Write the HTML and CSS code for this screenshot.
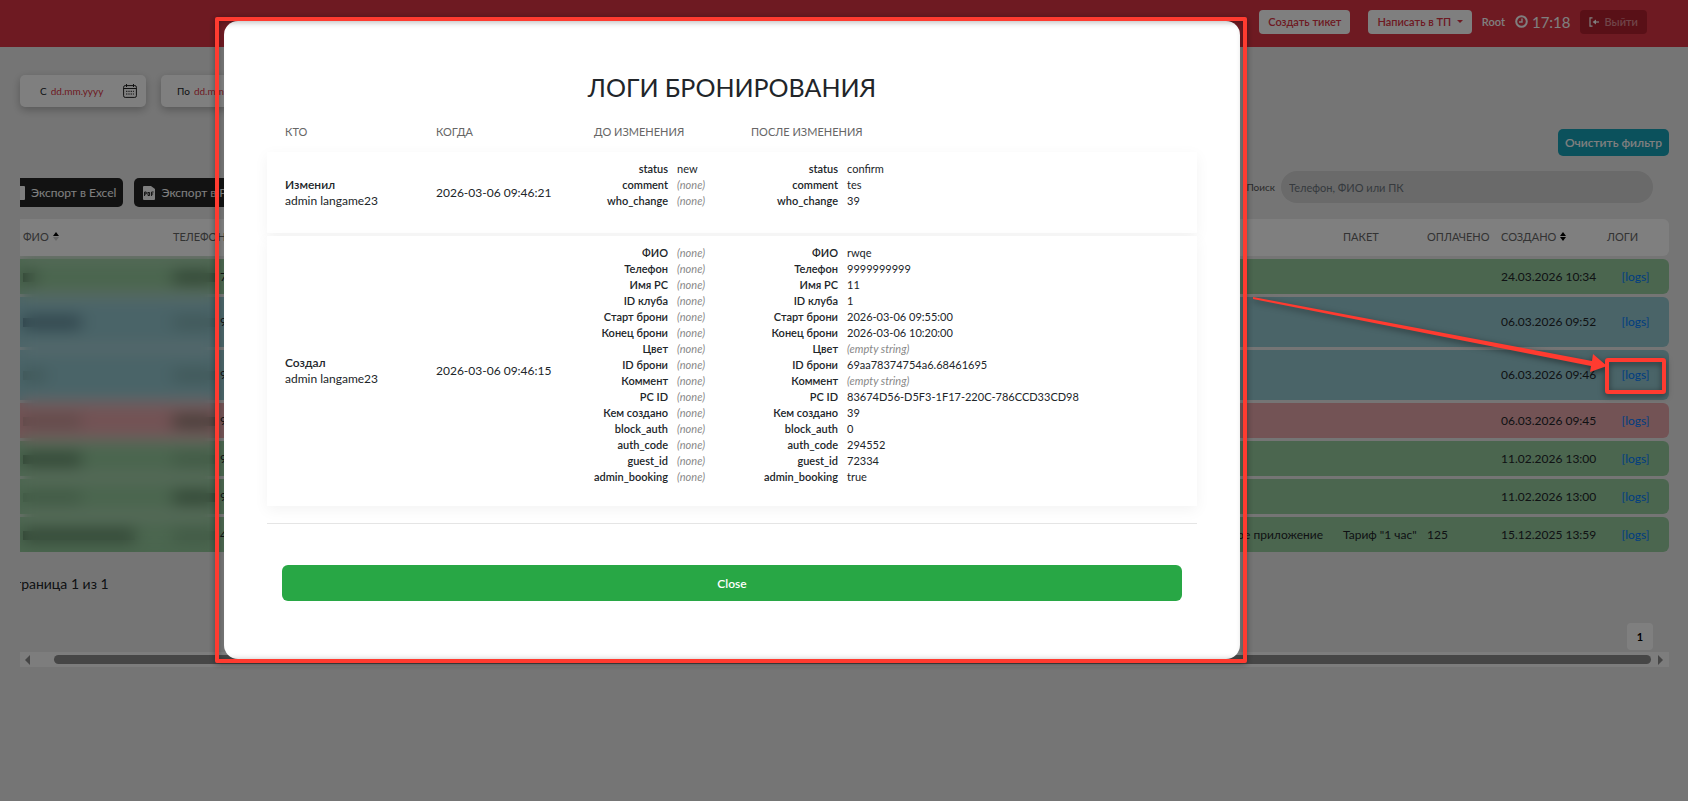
FILE: index.html
```html
<!DOCTYPE html>
<html lang="ru">
<head>
    <meta charset="UTF-8">
    <meta name="viewport" content="width=device-width, initial-scale=1.0">
    <title>Логи бронирования</title>
    <link rel="stylesheet" href="styles.css">
</head>
<body>
    <header class="topbar">
        <span class="topbar-title">Проба</span>
        <div class="topbar-actions">
            <button type="button" class="btn-light">Создать тикет</button>
            <button type="button" class="btn-light btn-support">Написать в ТП <span class="caret"></span></button>
            <span class="user">Root</span>
            <span class="clock">
                <svg width="13" height="13" viewBox="0 0 13 13" fill="none" stroke="currentColor" stroke-width="2"><circle cx="6.5" cy="6.5" r="5.3"/><path d="M7 3.5V7H4" stroke-width="1.4"/></svg>
                17:18
            </span>
            <button type="button" class="btn-exit">
                <svg width="10" height="10" viewBox="0 0 10 10" fill="none" stroke="currentColor" stroke-width="1.2"><path d="M3.5.8H1v8.4h2.5"/><path d="M10 5H5"/><path fill="currentColor" stroke="none" d="M3.6 5 7 2.6v4.8z"/></svg>
                Выйти
            </button>
        </div>
    </header>

    <main class="page">
        <div class="filters">
            <div class="date-box">
                <label for="dateFrom">С</label>
                <input type="text" id="dateFrom" placeholder="dd.mm.yyyy">
                <svg class="calendar" width="14" height="14" viewBox="0 0 14 14" fill="none" stroke="currentColor"><rect x=".6" y="1.6" width="12.8" height="11.8" rx="1.6"/><path d="M.6 4.5h12.8M3.5 0v3M10.5 0v3"/><path d="M3 7.3h8M3 10h8" stroke-dasharray="1.4 .9"/></svg>
            </div>
            <div class="date-box date-to">
                <label for="dateTo">По</label>
                <input type="text" id="dateTo" placeholder="dd.mm.yyyy">
            </div>
        </div>

        <div class="clear-row">
            <button type="button" class="btn-clear">Очистить фильтр</button>
        </div>

        <div class="scroller">
            <div class="toolbar">
                <button type="button" class="btn-export">
                    <svg width="13" height="14" viewBox="0 0 13 14"><path fill="#fff" d="M1 0h11a1 1 0 0 1 1 1v12a1 1 0 0 1-1 1H1a1 1 0 0 1-1-1V1a1 1 0 0 1 1-1z"/></svg>
                    Экспорт в Excel
                </button>
                <button type="button" class="btn-export">
                    <svg width="12" height="14" viewBox="0 0 12 14"><path fill="#fff" d="M1 0h7l4 3v10a1 1 0 0 1-1 1H1a1 1 0 0 1-1-1V1a1 1 0 0 1 1-1z"/><path fill="none" stroke="#222" d="M1.6 10V6h1.6v2H1.6M5 6v3.5h1.6V6.5H5M8.6 10V6h2M8.6 8h1.6"/></svg>
                    Экспорт в PDF
                </button>
                <div class="search">
                    <label for="search">Поиск</label>
                    <input type="search" id="search" placeholder="Телефон, ФИО или ПК">
                </div>
            </div>

            <div class="table-area">
                <table class="bookings">
                    <colgroup>
                        <col class="col-name"><col class="col-phone"><col><col class="col-source"><col class="col-package"><col class="col-paid"><col class="col-created"><col class="col-logs">
                    </colgroup>
                    <thead>
                        <tr>
                            <th>ФИО <svg width="6" height="9" viewBox="0 0 6 9"><path d="M0 4 3 0l3 4z"/><path class="faded" d="M0 5h6L3 9z"/></svg></th>
                            <th>ТЕЛЕФОН</th>
                            <th></th>
                            <th></th>
                            <th>ПАКЕТ</th>
                            <th>ОПЛАЧЕНО</th>
                            <th>СОЗДАНО <svg width="6" height="9" viewBox="0 0 6 9"><path d="M0 4 3 0l3 4zM0 5h6L3 9z"/></svg></th>
                            <th>ЛОГИ</th>
                        </tr>
                    </thead>
                    <tbody>
                        <tr class="green">
                            <td><span class="mask mask-xs"></span></td>
                            <td><span class="mask mask-phone"></span>7</td>
                            <td></td><td></td><td></td><td></td>
                            <td>24.03.2026 10:34</td>
                            <td><a href="#">[logs]</a></td>
                        </tr>
                        <tr class="blue tall">
                            <td><span class="mask mask-md mask-blue"></span></td>
                            <td><span class="mask mask-phone mask-faint"></span>9</td>
                            <td></td><td></td><td></td><td></td>
                            <td>06.03.2026 09:52</td>
                            <td><a href="#">[logs]</a></td>
                        </tr>
                        <tr class="blue tall">
                            <td><span class="mask mask-sm mask-faint"></span></td>
                            <td><span class="mask mask-phone mask-faint"></span>9</td>
                            <td></td><td></td><td></td><td></td>
                            <td>06.03.2026 09:46</td>
                            <td><a href="#">[logs]</a></td>
                        </tr>
                        <tr class="red">
                            <td><span class="mask mask-md mask-faint"></span></td>
                            <td><span class="mask mask-phone"></span>9</td>
                            <td></td><td></td><td></td><td></td>
                            <td>06.03.2026 09:45</td>
                            <td><a href="#">[logs]</a></td>
                        </tr>
                        <tr class="green">
                            <td><span class="mask mask-md"></span></td>
                            <td><span class="mask mask-phone mask-faint"></span>9</td>
                            <td></td><td></td><td></td><td></td>
                            <td>11.02.2026 13:00</td>
                            <td><a href="#">[logs]</a></td>
                        </tr>
                        <tr class="green">
                            <td><span class="mask mask-md mask-faint"></span></td>
                            <td><span class="mask mask-phone"></span>9</td>
                            <td></td><td></td><td></td><td></td>
                            <td>11.02.2026 13:00</td>
                            <td><a href="#">[logs]</a></td>
                        </tr>
                        <tr class="green">
                            <td><span class="mask mask-lg"></span></td>
                            <td><span class="mask mask-phone mask-faint"></span>4</td>
                            <td></td>
                            <td class="source">Мобильное приложение</td>
                            <td>Тариф "1 час"</td>
                            <td>125</td>
                            <td>15.12.2025 13:59</td>
                            <td><a href="#">[logs]</a></td>
                        </tr>
                    </tbody>
                </table>
                <div class="privacy-blur"></div>
            </div>

            <p class="page-info">Страница 1 из 1</p>
            <div class="pagination">
                <button type="button" class="page-btn">1</button>
            </div>
        </div>
        <div class="scrollbar">
            <svg width="5" height="10" viewBox="0 0 5 10"><path d="M5 0v10L0 5z"/></svg>
            <div class="thumb"></div>
            <svg width="5" height="10" viewBox="0 0 5 10"><path d="M0 0v10l5-5z"/></svg>
        </div>
    </main>

    <div class="overlay">
        <div class="modal" role="dialog" aria-labelledby="modalTitle">
            <h1 id="modalTitle">ЛОГИ БРОНИРОВАНИЯ</h1>
            <table class="logs">
                <colgroup>
                    <col class="log-who"><col class="log-when"><col class="log-before"><col>
                </colgroup>
                <thead>
                    <tr>
                        <th>КТО</th>
                        <th>КОГДА</th>
                        <th>ДО ИЗМЕНЕНИЯ</th>
                        <th>ПОСЛЕ ИЗМЕНЕНИЯ</th>
                    </tr>
                </thead>
                <tbody>
                    <tr>
                        <td><b>Изменил</b><br>admin langame23</td>
                        <td>2026-03-06 09:46:21</td>
                        <td class="props">
                            <dl>
                                <dt>status</dt><dd>new</dd>
                                <dt>comment</dt><dd><i>(none)</i></dd>
                                <dt>who_change</dt><dd><i>(none)</i></dd>
                            </dl>
                        </td>
                        <td class="props props-after">
                            <dl>
                                <dt>status</dt><dd>confirm</dd>
                                <dt>comment</dt><dd>tes</dd>
                                <dt>who_change</dt><dd>39</dd>
                            </dl>
                        </td>
                    </tr>
                    <tr>
                        <td><b>Создал</b><br>admin langame23</td>
                        <td>2026-03-06 09:46:15</td>
                        <td class="props">
                            <dl>
                                <dt>ФИО</dt><dd><i>(none)</i></dd>
                                <dt>Телефон</dt><dd><i>(none)</i></dd>
                                <dt>Имя PC</dt><dd><i>(none)</i></dd>
                                <dt>ID клуба</dt><dd><i>(none)</i></dd>
                                <dt>Старт брони</dt><dd><i>(none)</i></dd>
                                <dt>Конец брони</dt><dd><i>(none)</i></dd>
                                <dt>Цвет</dt><dd><i>(none)</i></dd>
                                <dt>ID брони</dt><dd><i>(none)</i></dd>
                                <dt>Коммент</dt><dd><i>(none)</i></dd>
                                <dt>PC ID</dt><dd><i>(none)</i></dd>
                                <dt>Кем создано</dt><dd><i>(none)</i></dd>
                                <dt>block_auth</dt><dd><i>(none)</i></dd>
                                <dt>auth_code</dt><dd><i>(none)</i></dd>
                                <dt>guest_id</dt><dd><i>(none)</i></dd>
                                <dt>admin_booking</dt><dd><i>(none)</i></dd>
                            </dl>
                        </td>
                        <td class="props props-after">
                            <dl>
                                <dt>ФИО</dt><dd>rwqe</dd>
                                <dt>Телефон</dt><dd>9999999999</dd>
                                <dt>Имя PC</dt><dd>11</dd>
                                <dt>ID клуба</dt><dd>1</dd>
                                <dt>Старт брони</dt><dd>2026-03-06 09:55:00</dd>
                                <dt>Конец брони</dt><dd>2026-03-06 10:20:00</dd>
                                <dt>Цвет</dt><dd><i>(empty string)</i></dd>
                                <dt>ID брони</dt><dd>69aa78374754a6.68461695</dd>
                                <dt>Коммент</dt><dd><i>(empty string)</i></dd>
                                <dt>PC ID</dt><dd>83674D56-D5F3-1F17-220C-786CCD33CD98</dd>
                                <dt>Кем создано</dt><dd>39</dd>
                                <dt>block_auth</dt><dd>0</dd>
                                <dt>auth_code</dt><dd>294552</dd>
                                <dt>guest_id</dt><dd>72334</dd>
                                <dt>admin_booking</dt><dd>true</dd>
                            </dl>
                        </td>
                    </tr>
                </tbody>
            </table>
            <hr>
            <button type="button" class="btn-close">Close</button>
            <div class="highlight"></div>
        </div>
    </div>

    <!-- Arrow from the dialog to the [logs] link -->
    <svg class="pointer" width="440" height="420" viewBox="0 0 440 420">
        <path fill="#ff3b30" d="M5 297 344 361 345 354 359 366 342 372 343 366 5 299z"/>
        <rect x="359" y="360" width="57" height="32" rx="1" fill="none" stroke="#ff3b30" stroke-width="4"/>
    </svg>
</body>
</html>
```
FILE: styles.css
```css
* {
    margin: 0;
    padding: 0;
    box-sizing: border-box;
}

body {
    font-family: Lato, 'Open Sans', sans-serif;
    font-size: 12px;
    line-height: 16px;
    color: #212529;
    background: #ebebeb;
    min-height: 100vh;
    overflow: hidden;
}

button,
input {
    font-family: inherit;
    font-size: 11px;
    border: none;
}

button {
    cursor: pointer;
    font-weight: 600;
}

/* Top bar */
.topbar {
    background: #dc3545;
    color: #fff;
    height: 47px;
    padding: 0 41px 4px 20px;
    display: flex;
    align-items: center;
}

.topbar-title {
    margin-left: auto;
    margin-right: 5px;
    font-size: 14px;
}

.topbar-actions {
    flex: 0 0 50%;
    display: flex;
    align-items: center;
    justify-content: flex-end;
}

.btn-light {
    background: #fff;
    color: #dc3545;
    height: 24px;
    padding: 0 9px;
    border-radius: 4px;
    margin-right: 18px;
}

.btn-support {
    margin-right: 10px;
}

.caret {
    display: inline-block;
    border: 3px solid transparent;
    border-top-color: #dc3545;
    border-bottom: 0;
    margin: 0 0 3px 3px;
}

.user {
    font-size: 11px;
    font-weight: 600;
    margin-right: 10px;
}

.clock {
    display: flex;
    align-items: center;
    gap: 4px;
    font-size: 15px;
    margin-right: 9px;
}

.btn-exit {
    background: #b2212f;
    color: #e08a92;
    height: 24px;
    padding: 0 9px;
    border-radius: 4px;
    display: flex;
    align-items: center;
    gap: 6px;
}

.btn-exit svg {
    color: #fff;
}

/* Page */
.page {
    padding: 28px 19px 0 20px;
}

.filters {
    display: flex;
    gap: 15px;
}

.date-box {
    width: 126px;
    height: 32px;
    display: flex;
    align-items: center;
    gap: 4px;
    padding: 0 9px 0 20px;
    background: #fff;
    border-radius: 5px;
    box-shadow: 0 3px 8px rgba(0, 0, 0, 0.25);
    font-size: 10px;
}

.date-to {
    padding-left: 16px;
}

.date-box input {
    flex: 1;
    min-width: 0;
    font-size: 10px;
    background: transparent;
}

.date-box input::placeholder {
    color: #dc3545;
}

.calendar {
    flex: none;
    color: #222;
}

.clear-row {
    display: flex;
    justify-content: flex-end;
    margin: 22px 0 15px;
}

.btn-clear {
    height: 27px;
    padding: 0 7px;
    border-radius: 5px;
    background: #17a2b8;
    color: #fff;
    font-size: 12px;
}

.scroller {
    overflow: hidden;
}

.toolbar {
    display: flex;
    align-items: center;
    gap: 11px;
    height: 32px;
    margin: 0 16px 13px -17px;
}

.btn-export {
    display: flex;
    align-items: center;
    gap: 6px;
    height: 29px;
    padding: 0 7px 0 9px;
    margin-top: 11px;
    border-radius: 5px;
    background: #252525;
    color: #fff;
    font-size: 12px;
    font-weight: 400;
    white-space: nowrap;
}

.search {
    display: flex;
    align-items: center;
    gap: 6px;
    margin-left: auto;
}

.search label {
    font-size: 10px;
    color: #555;
}

.search input {
    width: 372px;
    height: 32px;
    padding: 0 8px;
    border-radius: 16px;
    background: #d4d4d4;
}

.search input::placeholder {
    color: #6c757d;
}

/* Bookings table */
.table-area {
    position: relative;
}

.bookings {
    width: 100%;
    table-layout: fixed;
    border-collapse: separate;
    border-spacing: 0 3px;
}

.col-name { width: 150px; }
.col-phone { width: 120px; }
.col-source { width: 170px; }
.col-package { width: 84px; }
.col-paid { width: 74px; }
.col-created { width: 106px; }
.col-logs { width: 65px; }

.bookings th {
    height: 37px;
    padding: 0 3px 2px;
    background: #fff;
    color: #666;
    font-size: 11px;
    font-weight: 400;
    text-align: left;
    white-space: nowrap;
}

.bookings th svg {
    margin-left: 1px;
    fill: #000;
}

.bookings th .faded {
    fill: #ccc;
}

.bookings td {
    height: 35px;
    padding: 0 3px;
    white-space: nowrap;
}

.bookings .tall td {
    height: 50px;
}

.bookings th:last-child,
.bookings td:last-child {
    border-radius: 0 6px 6px 0;
}

.bookings td:last-child {
    padding-right: 5px;
    text-align: center;
}

.bookings a {
    color: #007bff;
    text-decoration: none;
}

.bookings td.source {
    padding-right: 17px;
    text-align: right;
}

.green td { background: #96cc9e; }
.blue td { background: #94c8d0; }
.red td { background: #e6a6aa; }

/* Personal data */
.mask {
    display: inline-block;
    height: 9px;
    vertical-align: middle;
    background: #3e5a44;
    opacity: 0.8;
}

.mask-xs { width: 12px; }
.mask-sm { width: 22px; }
.mask-md { width: 58px; }
.mask-lg { width: 112px; }
.mask-phone { width: 42px; margin-right: 5px; }
.mask-blue { background: #36566a; }
.mask-faint { opacity: 0.3; }

.privacy-blur {
    position: absolute;
    top: 40px;
    left: 0;
    bottom: 3px;
    width: 199px;
    backdrop-filter: blur(8px);
}

.page-info {
    font-size: 14px;
    line-height: 20px;
    margin: 19px 0 29px -15px;
}

.pagination {
    display: flex;
    justify-content: flex-end;
    padding-right: 16px;
}

.page-btn {
    width: 26px;
    height: 27px;
    border-radius: 4px;
    background: #fff;
    font-weight: 700;
}

.scrollbar {
    display: flex;
    align-items: center;
    gap: 7px;
    height: 15px;
    margin-top: 2px;
    padding: 0 6px 0 5px;
    background: #fafafa;
}

.scrollbar svg {
    fill: #8c8c8c;
}

.thumb {
    flex: 1;
    height: 9px;
    margin-left: 17px;
    border-radius: 5px;
    background: #8c8c8c;
}

/* Modal */
.overlay {
    position: fixed;
    inset: 0;
    padding: 21px 448px 0 224px;
    background: rgba(0, 0, 0, 0.5);
}

.modal {
    position: relative;
    padding: 50px 43px 58px;
    border-radius: 14px;
    background: #fff;
}

.modal h1 {
    margin-bottom: 1px;
    font-size: 25px;
    line-height: 32px;
    font-weight: 400;
    text-align: center;
}

.logs {
    width: 100%;
    table-layout: fixed;
    border-collapse: separate;
    border-spacing: 0 3px;
}

.log-who { width: 151px; }
.log-when { width: 158px; }
.log-before { width: 157px; }

.logs th {
    padding: 17px 18px 9px;
    color: #666;
    font-size: 11px;
    font-weight: 400;
    text-align: left;
    white-space: nowrap;
}

.logs tbody tr {
    background: #fff;
    box-shadow: 0 4px 14px rgba(0, 0, 0, 0.05);
}

.logs td {
    height: 81px;
    padding: 9px 0 21px 18px;
}

.logs td:nth-child(-n+2) {
    padding: 0 0 0 18px;
}

.logs b,
.logs dt {
    font-weight: 600;
}

.logs .props {
    vertical-align: top;
}

.props dl {
    display: grid;
    grid-template-columns: 74px 1fr;
    column-gap: 9px;
    font-size: 11px;
}

.props-after dl {
    grid-template-columns: 87px 1fr;
}

.props dt {
    text-align: right;
}

.props i {
    color: #888;
}

.modal hr {
    border: none;
    border-top: 1px solid #e5e5e5;
    margin: 14px 0 41px;
}

.btn-close {
    display: block;
    width: calc(100% - 30px);
    height: 36px;
    margin: 0 auto;
    border-radius: 6px;
    background: #28a745;
    color: #fff;
    font-size: 12px;
}

/* Annotations */
.highlight {
    position: absolute;
    inset: -4px -7px -4px -9px;
    border: 4px solid #ff3b30;
    border-radius: 2px;
    box-shadow: 0 1px 6px rgba(0, 0, 0, 0.4), inset 0 1px 6px rgba(0, 0, 0, 0.3);
    pointer-events: none;
}

.pointer {
    position: absolute;
    top: 0;
    right: 0;
    pointer-events: none;
    filter: drop-shadow(0 2px 3px rgba(0, 0, 0, 0.5));
}
```
